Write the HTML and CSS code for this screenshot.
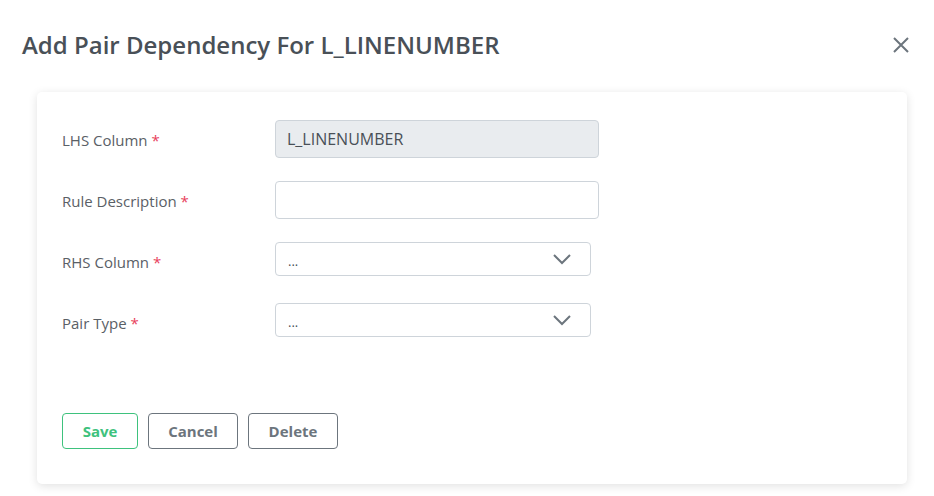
FILE: index.html
```html
<!DOCTYPE html>
<html lang="en">
<head>
  <meta charset="UTF-8">
  <meta name="viewport" content="width=device-width, initial-scale=1.0">
  <title>Add Pair Dependency</title>
  <link rel="stylesheet" href="styles.css">
</head>
<body>
  <div class="modal">
    <div class="modal-header">
      <h2>Add Pair Dependency For L_LINENUMBER</h2>
      <button class="close-btn" aria-label="Close">
        <svg width="18" height="18" viewBox="0 0 18 18"><path d="M2 2 L16 16 M16 2 L2 16" stroke="#6c757d" stroke-width="2" fill="none"/></svg>
      </button>
    </div>

    <div class="card">
      <div class="form-row">
        <label>LHS Column <span class="req">*</span></label>
        <input type="text" class="text-input" value="L_LINENUMBER" disabled>
      </div>
      <div class="form-row">
        <label>Rule Description <span class="req">*</span></label>
        <input type="text" class="text-input">
      </div>
      <div class="form-row">
        <label>RHS Column <span class="req">*</span></label>
        <div class="select-box">
          <span>...</span>
          <svg width="20" height="12" viewBox="0 0 20 12"><path d="M2 2 L10 10 L18 2" stroke="#6c757d" stroke-width="2" fill="none"/></svg>
        </div>
      </div>
      <div class="form-row">
        <label>Pair Type <span class="req">*</span></label>
        <div class="select-box">
          <span>...</span>
          <svg width="20" height="12" viewBox="0 0 20 12"><path d="M2 2 L10 10 L18 2" stroke="#6c757d" stroke-width="2" fill="none"/></svg>
        </div>
      </div>

      <div class="actions">
        <button class="btn btn-save">Save</button>
        <button class="btn btn-plain">Cancel</button>
        <button class="btn btn-plain">Delete</button>
      </div>
    </div>
  </div>
</body>
</html>
```

FILE: styles.css
```css
body {
  margin: 0;
  font-family: "Open Sans", "Noto Sans", Arial, sans-serif;
  background: #ffffff;
  color: #495057;
}

.modal {
  width: 934px;
}

.modal-header {
  display: flex;
  justify-content: space-between;
  align-items: center;
  padding: 23px 22px 0 22px;
  height: 43px;
}

.modal-header h2 {
  margin: 0;
  font-size: 24px;
  font-weight: 550;
  color: #495057;
}

.close-btn {
  background: none;
  border: none;
  padding: 0;
  margin-right: 2px;
  cursor: pointer;
  display: flex;
}

.card {
  margin: 26px 27px 12px 37px;
  padding: 28px 25px 35px 25px;
  background: #ffffff;
  border-radius: 5px;
  box-shadow: 0 2px 10px rgba(0, 0, 0, 0.12);
}

.form-row {
  display: flex;
  align-items: flex-start;
  height: 61px;
}

.form-row:nth-child(4) {
  height: 34px;
}

.form-row label {
  width: 213px;
  font-size: 15px;
  font-weight: 400;
  color: #5a6066;
  padding-top: 10px;
}

.req {
  color: #e83e5c;
}

.text-input {
  box-sizing: border-box;
  width: 324px;
  height: 38px;
  padding: 0 11px;
  border: 1px solid #ced4da;
  border-radius: 4px;
  font-family: inherit;
  font-size: 16px;
  color: #495057;
  background: #ffffff;
  outline: none;
}

.text-input:disabled {
  background: #e9ecef;
}

.select-box {
  box-sizing: border-box;
  width: 316px;
  height: 34px;
  padding: 0 18px 0 12px;
  border: 1px solid #ced4da;
  border-radius: 4px;
  display: flex;
  align-items: center;
  justify-content: space-between;
  font-size: 13px;
  color: #495057;
}

.select-box span {
  padding-top: 4px;
}

.actions {
  display: flex;
  gap: 10px;
  margin-top: 76px;
}

.btn {
  box-sizing: border-box;
  height: 36px;
  background: #ffffff;
  border-radius: 4px;
  font-family: inherit;
  font-size: 15px;
  font-weight: 700;
  cursor: pointer;
}

.btn-save {
  width: 76px;
  border: 1px solid #3ec27d;
  color: #3ec27d;
}

.btn-plain {
  width: 90px;
  border: 1px solid #6c757d;
  color: #6c757d;
}
```
